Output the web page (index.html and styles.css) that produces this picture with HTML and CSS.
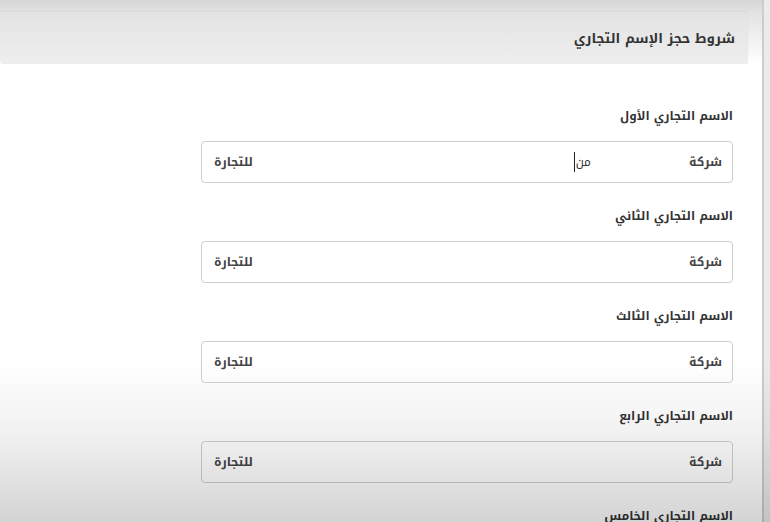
FILE: index.html
```html
<!DOCTYPE html>
<html lang="ar" dir="rtl">
<head>
  <meta charset="UTF-8">
  <meta name="viewport" content="width=device-width, initial-scale=1.0">
  <title>حجز الإسم التجاري</title>
  <link rel="stylesheet" href="styles.css">
</head>
<body>
  <div class="scroll-strip"></div>
  <div class="page">
    <div class="panel-heading">شروط حجز الإسم التجاري</div>
    <div class="form-body">
      <div class="form-group">
        <label>الاسم التجاري الأول</label>
        <div class="input-group">
          <span class="addon addon-start">شركة</span>
          <span class="name-input">من<span class="caret"></span></span>
          <span class="addon addon-end">للتجارة</span>
        </div>
      </div>
      <div class="form-group">
        <label>الاسم التجاري الثاني</label>
        <div class="input-group">
          <span class="addon addon-start">شركة</span>
          <span class="name-input"></span>
          <span class="addon addon-end">للتجارة</span>
        </div>
      </div>
      <div class="form-group">
        <label>الاسم التجاري الثالث</label>
        <div class="input-group">
          <span class="addon addon-start">شركة</span>
          <span class="name-input"></span>
          <span class="addon addon-end">للتجارة</span>
        </div>
      </div>
      <div class="form-group">
        <label>الاسم التجاري الرابع</label>
        <div class="input-group">
          <span class="addon addon-start">شركة</span>
          <span class="name-input"></span>
          <span class="addon addon-end">للتجارة</span>
        </div>
      </div>
      <div class="form-group">
        <label>الاسم التجاري الخامس</label>
      </div>
    </div>
  </div>
  <div class="vignette"></div>
</body>
</html>
```

FILE: styles.css
```css
html, body {
  height: 100%;
}

body {
  margin: 0;
  font-family: 'Noto Kufi Arabic', 'Noto Sans Arabic', 'DejaVu Sans', sans-serif;
  color: #333;
  background-color: #fff;
  display: flex;
  overflow: hidden;
}

.scroll-strip {
  width: 6px;
  flex-shrink: 0;
  background: #ebebeb;
  border-left: 2px solid #cdcdcd;
}

.page {
  flex: 1;
  padding-top: 12px;
  background: linear-gradient(to bottom, #d6d6d6 0, #e2e2e2 12px, #fff 64px);
}

.panel-heading {
  height: 52px;
  margin-right: 14px;
  padding-right: 13px;
  display: flex;
  align-items: center;
  font-size: 13.5px;
  font-weight: bold;
  color: #333;
  background: linear-gradient(to bottom, #e3e3e3, #eeeeee);
  border-radius: 3px 0 0 3px;
  box-shadow: 0 -1px 2px rgba(0, 0, 0, 0.05);
}

.form-body {
  padding: 42px 29px 0 0;
}

.form-group {
  width: 532px;
  margin-bottom: 23px;
}

label {
  display: block;
  height: 20px;
  line-height: 20px;
  margin-bottom: 15px;
  font-size: 12px;
  font-weight: bold;
  color: #333;
}

.input-group {
  display: flex;
  height: 42px;
  box-sizing: border-box;
  border: 1px solid #cfcfcf;
  border-radius: 4px;
  background: #fff;
  font-size: 12px;
  font-weight: bold;
  color: #444;
  align-items: center;
}

.addon-start {
  width: 131px;
  padding-right: 10px;
  box-sizing: border-box;
}

.name-input {
  flex: 1;
  padding-right: 10px;
  display: flex;
  align-items: center;
  font-weight: normal;
  color: #333;
}

.caret {
  display: inline-block;
  width: 1px;
  height: 20px;
  background: #222;
  margin-right: 1px;
}

.addon-end {
  padding-left: 12px;
}

.vignette {
  position: fixed;
  inset: 0;
  pointer-events: none;
  background: linear-gradient(to bottom,
    rgba(0, 0, 0, 0) 0,
    rgba(0, 0, 0, 0) 360px,
    rgba(0, 0, 0, 0.05) 430px,
    rgba(0, 0, 0, 0.17) 522px);
}
```
